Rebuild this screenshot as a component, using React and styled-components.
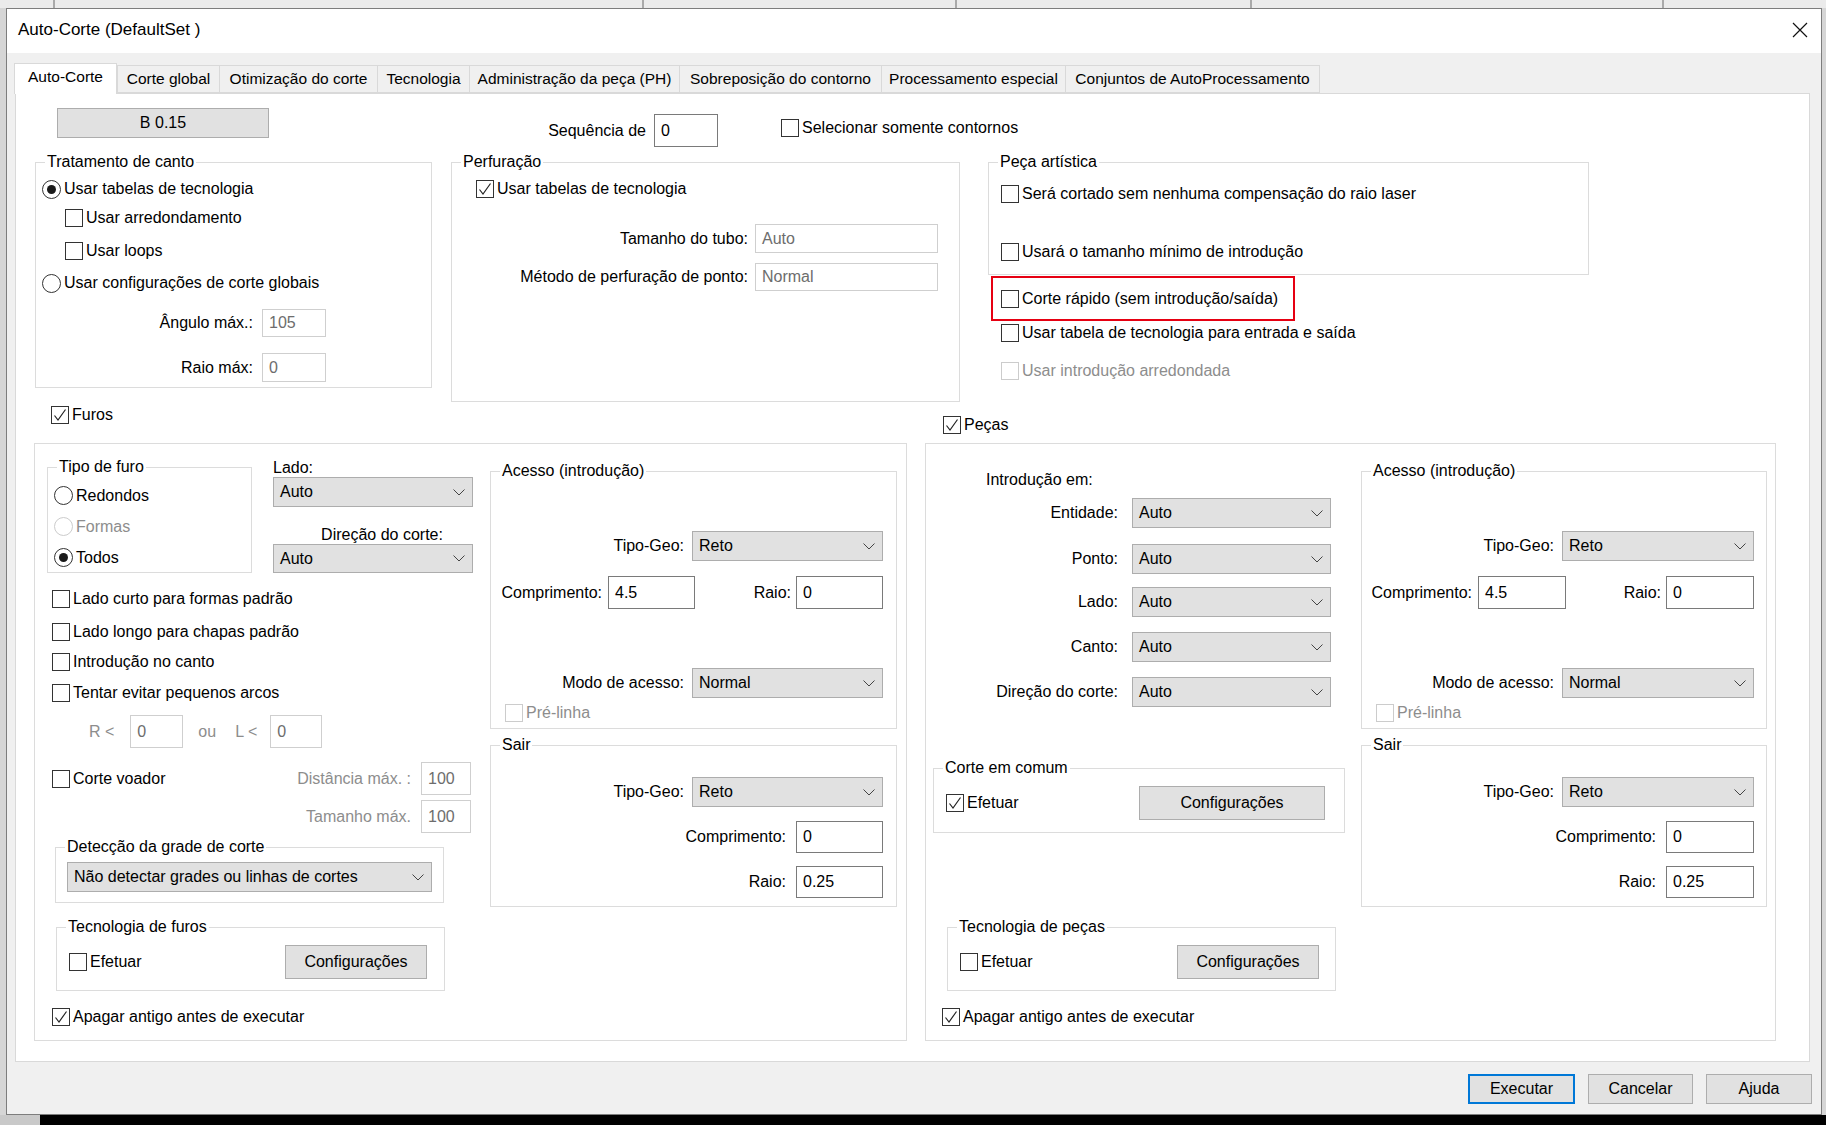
import React from 'react';
import styled, { createGlobalStyle } from 'styled-components';

const GlobalStyle = createGlobalStyle`
  * { box-sizing: border-box; }
  html, body { margin: 0; padding: 0; }
  body {
    font-family: "Liberation Sans", Arial, sans-serif;
    font-size: 16px;
    color: #000;
    background: #d6d6d6;
  }
`;

const Desktop = styled.div`
  width: 1826px;
  height: 1125px;
  overflow: hidden;
  display: flex;
  flex-direction: column;
  background: #d6d6d6;
`;

const BackBar = styled.div`
  height: 8px;
  flex-shrink: 0;
  display: flex;
  background: #ebebeb;
`;

const BackCell = styled.div`
  flex-shrink: 0;
  width: ${p => p.$w}px;
  border-right: 2px solid #a9a9a9;
`;

const BottomBar = styled.div`
  height: 10px;
  flex-shrink: 0;
  display: flex;
  background: #000;
`;

const BottomEdge = styled.div`
  width: 40px;
  background: #c9c9c9;
`;

const Dialog = styled.div`
  width: 1816px;
  height: 1107px;
  margin-left: 6px;
  flex-shrink: 0;
  display: flex;
  flex-direction: column;
  background: #f0f0f0;
  border: 1px solid #7d7d7d;
`;

const TitleBar = styled.div`
  height: 44px;
  flex-shrink: 0;
  display: flex;
  align-items: center;
  justify-content: space-between;
  padding: 0 13px 2px 11px;
  background: #fff;
  font-size: 17px;
`;

const Body = styled.div`
  flex: 1;
  display: flex;
  flex-direction: column;
  padding: 12px 11px 0 8px;
`;

const TabStrip = styled.div`
  height: 28px;
  display: flex;
  align-items: flex-end;
  margin-left: -1px;
`;

const Tab = styled.div`
  flex-shrink: 0;
  position: relative;
  z-index: ${p => (p.$active ? 2 : 1)};
  width: ${p => p.$w}px;
  height: ${p => (p.$active ? 31 : 28)}px;
  margin-bottom: ${p => (p.$active ? -1 : 0)}px;
  margin-left: ${p => (p.$first || p.$afterActive ? 0 : -1)}px;
  display: flex;
  align-items: center;
  justify-content: center;
  padding-bottom: ${p => (p.$active ? 4 : 0)}px;
  font-size: 15.5px;
  white-space: nowrap;
  background: ${p => (p.$active ? '#fff' : '#f0f0f0')};
  border: 1px solid #d9d9d9;
  border-bottom: ${p => (p.$active ? 'none' : '1px solid #d9d9d9')};
`;

const Panel = styled.div`
  width: 1795px;
  height: 969px;
  flex-shrink: 0;
  background: #fff;
  border: 1px solid #d9d9d9;
`;

const Footer = styled.div`
  flex: 1;
  display: flex;
  justify-content: flex-end;
  align-items: flex-start;
  gap: 13px;
  padding: 12px 0 0 0;
  margin-right: -2px;
`;

const Row = styled.div`
  flex-shrink: 0;
  display: flex;
  align-items: ${p => p.$ai || 'center'};
  justify-content: ${p => p.$jc || 'flex-start'};
  height: ${p => p.$h || 26}px;
  width: ${p => (p.$w ? `${p.$w}px` : 'auto')};
  margin-top: ${p => p.$mt || 0}px;
  margin-left: ${p => p.$ml || 0}px;
  padding-left: ${p => p.$pl || 0}px;
  padding-right: ${p => p.$pr || 0}px;
`;

const Stack = styled.div`
  flex-shrink: 0;
  display: flex;
  flex-direction: column;
  width: ${p => p.$w}px;
  margin-top: ${p => p.$mt || 0}px;
  margin-left: ${p => p.$ml || 0}px;
`;

const Header = styled.div`
  height: 41px;
  display: flex;
  flex-direction: column;
`;

const BigBox = styled.div`
  width: ${p => p.$w}px;
  height: 598px;
  display: flex;
  align-items: flex-start;
  border: 1px solid #dcdcdc;
`;

const Group = styled.div`
  position: relative;
  flex-shrink: 0;
  display: flex;
  flex-direction: column;
  width: ${p => p.$w}px;
  height: ${p => p.$h}px;
  margin-top: ${p => p.$mt || 0}px;
  margin-left: ${p => p.$ml || 0}px;
  border: 1px solid #dcdcdc;
`;

const Legend = styled.span`
  position: absolute;
  top: -11px;
  left: ${p => p.$x || 9}px;
  padding: 0 2px;
  line-height: 20px;
  background: #fff;
  white-space: nowrap;
`;

const RedFrame = styled.div`
  width: 304px;
  height: 45px;
  margin: 1px 0 0 3px;
  display: flex;
  align-items: center;
  padding-left: 8px;
  border: 2px solid #e60012;
`;

const Label = styled.span`
  flex-shrink: 0;
  display: inline-block;
  width: ${p => (p.$w ? `${p.$w}px` : 'auto')};
  text-align: ${p => (p.$right ? 'right' : 'left')};
  margin-left: ${p => p.$ml || 0}px;
  padding-left: ${p => p.$pl || 0}px;
  color: ${p => (p.$off ? '#8d8d8d' : '#000')};
  white-space: nowrap;
`;

const Field = styled.div`
  flex-shrink: 0;
  width: ${p => p.$w}px;
  height: ${p => p.$h || 30}px;
  margin-left: ${p => p.$ml || 0}px;
  padding: ${p => Math.max(0, Math.round(((p.$h || 30) - 20) / 2) - 1)}px 0 0 6px;
  line-height: 20px;
  background: #fff;
  border: 1px solid ${p => (p.$off ? '#cfcfcf' : '#7a7a7a')};
  color: ${p => (p.$off ? '#6d6d6d' : '#000')};
`;

const SelectBox = styled.div`
  flex-shrink: 0;
  display: flex;
  align-items: center;
  justify-content: space-between;
  width: ${p => p.$w}px;
  height: ${p => p.$h || 30}px;
  margin-top: ${p => p.$mt || 0}px;
  margin-left: ${p => p.$ml || 0}px;
  padding: 0 7px 0 6px;
  background: #e1e1e1;
  border: 1px solid #adadad;
`;

const Btn = styled.button`
  flex-shrink: 0;
  width: ${p => p.$w}px;
  height: ${p => p.$h || 30}px;
  margin-left: ${p => p.$ml || 0}px;
  padding: 0;
  font: inherit;
  color: #000;
  background: #e1e1e1;
  border: ${p => (p.$default ? '2px solid #0078d7' : '1px solid #adadad')};
`;

const CheckLabel = styled.span`
  display: inline-flex;
  align-items: center;
  gap: 3px;
  white-space: nowrap;
  color: ${p => (p.$off ? '#8d8d8d' : '#000')};
`;

const CheckBox = styled.span`
  width: 18px;
  height: 18px;
  display: inline-flex;
  align-items: center;
  justify-content: center;
  background: #fff;
  border: 1px solid ${p => (p.$off ? '#cccccc' : '#333')};
`;

const RadioDot = styled.span`
  width: 19px;
  height: 19px;
  display: inline-flex;
  align-items: center;
  justify-content: center;
  border-radius: 50%;
  background: #fff;
  border: 1px solid ${p => (p.$off ? '#cccccc' : '#333')};
  &::after {
    content: '';
    display: ${p => (p.$on ? 'block' : 'none')};
    width: 9px;
    height: 9px;
    border-radius: 50%;
    background: #1a1a1a;
  }
`;

const Check = ({ checked, disabled, children }) => (
  <CheckLabel $off={disabled}>
    <CheckBox $off={disabled}>
      {checked && (
        <svg width="14" height="14" viewBox="0 0 14 14">
          <polyline points="1.5,7.5 5,12 12.5,1.5" fill="none" stroke="#222" strokeWidth="1.2" />
        </svg>
      )}
    </CheckBox>
    {children}
  </CheckLabel>
);

const Radio = ({ checked, disabled, children }) => (
  <CheckLabel $off={disabled}>
    <RadioDot $on={checked} $off={disabled} />
    {children}
  </CheckLabel>
);

const Chevron = () => (
  <svg width="12" height="7" viewBox="0 0 12 7">
    <polyline points="0.5,0.5 6,6 11.5,0.5" fill="none" stroke="#444" strokeWidth="1" />
  </svg>
);

const Select = ({ value, ...rest }) => (
  <SelectBox {...rest}>
    <span>{value}</span>
    <Chevron />
  </SelectBox>
);

const CloseIcon = () => (
  <svg width="16" height="16" viewBox="0 0 16 16">
    <path d="M1 1 L15 15 M15 1 L1 15" stroke="#111" strokeWidth="1.2" />
  </svg>
);

const tabs = [
  { label: 'Auto-Corte', w: 103, active: true },
  { label: 'Corte global', w: 103 },
  { label: 'Otimização do corte', w: 159 },
  { label: 'Tecnologia', w: 93 },
  { label: 'Administração da peça (PH)', w: 211 },
  { label: 'Sobreposição do contorno', w: 203 },
  { label: 'Processamento especial', w: 185 },
  { label: 'Conjuntos de AutoProcessamento', w: 255 },
];

const AccessGroup = ({ w, selW, inW, pr }) => (
  <Group $w={w} $h={258} $mt={27}>
    <Legend>Acesso (introdução)</Legend>
    <Row $mt={59} $h={30} $jc="flex-end" $pr={pr}>
      <Label>Tipo-Geo:</Label>
      <Select $ml={8} $w={selW} value="Reto" />
    </Row>
    <Row $mt={15} $h={33} $jc="space-between" $pr={pr}>
      <Row $w={204} $h={33} $jc="flex-end">
        <Label>Comprimento:</Label>
        <Field $ml={6} $w={inW} $h={33}>4.5</Field>
      </Row>
      <Row $h={33}>
        <Label>Raio:</Label>
        <Field $ml={5} $w={inW} $h={33}>0</Field>
      </Row>
    </Row>
    <Row $mt={59} $h={30} $jc="flex-end" $pr={pr}>
      <Label>Modo de acesso:</Label>
      <Select $ml={8} $w={selW} value="Normal" />
    </Row>
    <Row $mt={3} $h={24} $pl={14}>
      <Check disabled>Pré-linha</Check>
    </Row>
  </Group>
);

const ExitGroup = ({ w, selW, inW, pr }) => (
  <Group $w={w} $h={162} $mt={16}>
    <Legend>Sair</Legend>
    <Row $mt={31} $h={30} $jc="flex-end" $pr={pr}>
      <Label>Tipo-Geo:</Label>
      <Select $ml={8} $w={selW} value="Reto" />
    </Row>
    <Row $mt={14} $h={32} $jc="flex-end" $pr={pr}>
      <Label>Comprimento:</Label>
      <Field $ml={10} $w={inW} $h={32}>0</Field>
    </Row>
    <Row $mt={13} $h={32} $jc="flex-end" $pr={pr}>
      <Label>Raio:</Label>
      <Field $ml={10} $w={inW} $h={32}>0.25</Field>
    </Row>
  </Group>
);

const FurosColumn = () => (
  <Stack $w={873} $ml={18}>
    <Header>
      <Row $h={26} $pl={17}>
        <Check checked>Furos</Check>
      </Row>
    </Header>
    <BigBox $w={873}>
      <Stack $w={440}>
        <Row $mt={14} $h={115} $ai="flex-start">
          <Group $ml={12} $mt={9} $w={205} $h={106}>
            <Legend>Tipo de furo</Legend>
            <Row $mt={12} $h={31} $pl={6}>
              <Radio>Redondos</Radio>
            </Row>
            <Row $h={31} $pl={6}>
              <Radio disabled>Formas</Radio>
            </Row>
            <Row $h={31} $pl={6}>
              <Radio checked>Todos</Radio>
            </Row>
          </Group>
          <Stack $w={200} $ml={21}>
            <Row $h={19}>
              <Label>Lado:</Label>
            </Row>
            <Select $w={200} $h={30} value="Auto" />
            <Row $mt={18} $h={19} $jc="center" $pl={18}>
              <Label>Direção do corte:</Label>
            </Row>
            <Select $w={200} $h={29} value="Auto" />
          </Stack>
        </Row>
        <Row $mt={13} $pl={17}>
          <Check>Lado curto para formas padrão</Check>
        </Row>
        <Row $mt={7} $pl={17}>
          <Check>Lado longo para chapas padrão</Check>
        </Row>
        <Row $mt={4} $pl={17}>
          <Check>Introdução no canto</Check>
        </Row>
        <Row $mt={5} $pl={17}>
          <Check>Tentar evitar pequenos arcos</Check>
        </Row>
        <Row $mt={9} $h={33} $pl={54}>
          <Label $off>R &lt;</Label>
          <Field $off $ml={16} $w={53} $h={33}>0</Field>
          <Label $off $ml={15}>ou</Label>
          <Label $off $ml={19}>L &lt;</Label>
          <Field $off $ml={13} $w={52} $h={33}>0</Field>
        </Row>
        <Row $mt={14} $h={33} $w={436} $pl={17} $jc="space-between">
          <Check>Corte voador</Check>
          <Row $h={33}>
            <Label $off>Distância máx. :</Label>
            <Field $off $ml={10} $w={50} $h={33}>100</Field>
          </Row>
        </Row>
        <Row $mt={5} $h={33} $w={436} $jc="flex-end">
          <Label $off>Tamanho máx.</Label>
          <Field $off $ml={10} $w={50} $h={33}>100</Field>
        </Row>
        <Group $mt={14} $ml={20} $w={389} $h={56}>
          <Legend>Detecção da grade de corte</Legend>
          <Select $mt={14} $ml={11} $w={365} $h={30} value="Não detectar grades ou linhas de cortes" />
        </Group>
        <Group $mt={24} $ml={21} $w={389} $h={64}>
          <Legend>Tecnologia de furos</Legend>
          <Row $mt={17} $h={34} $pl={12} $pr={17} $jc="space-between">
            <Check>Efetuar</Check>
            <Btn $w={142} $h={34}>Configurações</Btn>
          </Row>
        </Group>
        <Row $mt={13} $pl={17}>
          <Check checked>Apagar antigo antes de executar</Check>
        </Row>
      </Stack>
      <Stack $w={407} $ml={15}>
        <AccessGroup w={407} selW={191} inW={87} pr={13} />
        <ExitGroup w={407} selW={191} inW={87} pr={13} />
      </Stack>
    </BigBox>
  </Stack>
);

const entryRows = [
  { label: 'Entidade:', mt: 8 },
  { label: 'Ponto:', mt: 16 },
  { label: 'Lado:', mt: 13 },
  { label: 'Canto:', mt: 15 },
  { label: 'Direção do corte:', mt: 15 },
];

const PecasColumn = () => (
  <Stack $w={851} $ml={18}>
    <Header>
      <Row $mt={10} $h={26} $pl={18}>
        <Check checked>Peças</Check>
      </Row>
    </Header>
    <BigBox $w={851}>
      <Stack $w={435}>
        <Row $mt={26} $h={20} $pl={60}>
          <Label>Introdução em:</Label>
        </Row>
        {entryRows.map(r => (
          <Row key={r.label} $mt={r.mt} $h={30}>
            <Label $w={192} $right>{r.label}</Label>
            <Select $ml={14} $w={199} value="Auto" />
          </Row>
        ))}
        <Group $mt={61} $ml={7} $w={412} $h={65}>
          <Legend>Corte em comum</Legend>
          <Row $mt={17} $h={34} $pl={12} $pr={19} $jc="space-between">
            <Check checked>Efetuar</Check>
            <Btn $w={186} $h={34}>Configurações</Btn>
          </Row>
        </Group>
        <Group $mt={94} $ml={21} $w={389} $h={64}>
          <Legend>Tecnologia de peças</Legend>
          <Row $mt={17} $h={34} $pl={12} $pr={16} $jc="space-between">
            <Check>Efetuar</Check>
            <Btn $w={142} $h={34}>Configurações</Btn>
          </Row>
        </Group>
        <Row $mt={13} $pl={16}>
          <Check checked>Apagar antigo antes de executar</Check>
        </Row>
      </Stack>
      <Stack $w={406}>
        <AccessGroup w={406} selW={192} inW={88} pr={12} />
        <ExitGroup w={406} selW={192} inW={88} pr={12} />
      </Stack>
    </BigBox>
  </Stack>
);

export default function App() {
  return (
    <Desktop>
      <GlobalStyle />
      <BackBar>
        <BackCell $w={55} />
        <BackCell $w={589} />
        <BackCell $w={313} />
        <BackCell $w={295} />
        <BackCell $w={412} />
      </BackBar>
      <Dialog>
        <TitleBar>
          <span>Auto-Corte (DefaultSet )</span>
          <CloseIcon />
        </TitleBar>
        <Body>
          <TabStrip>
            {tabs.map((t, i) => (
              <Tab
                key={t.label}
                $w={t.w}
                $active={t.active}
                $first={i === 0}
                $afterActive={i > 0 && tabs[i - 1].active}
              >
                {t.label}
              </Tab>
            ))}
          </TabStrip>
          <Panel>
            <Row $mt={14} $h={39} $ai="flex-start">
              <Btn $ml={41} $w={212} $h={30}>B 0.15</Btn>
              <Row $w={449} $h={33} $jc="flex-end" $mt={6}>
                <Label>Sequência de</Label>
                <Field $ml={8} $w={64} $h={33}>0</Field>
              </Row>
              <Row $ml={63} $mt={7} $h={26}>
                <Check>Selecionar somente contornos</Check>
              </Row>
            </Row>
            <Row $mt={15} $h={240} $ai="flex-start">
              <Group $ml={19} $w={397} $h={226}>
                <Legend>Tratamento de canto</Legend>
                <Row $mt={11} $h={30} $pl={6}>
                  <Radio checked>Usar tabelas de tecnologia</Radio>
                </Row>
                <Row $h={28} $pl={29}>
                  <Check>Usar arredondamento</Check>
                </Row>
                <Row $h={38} $pl={29}>
                  <Check>Usar loops</Check>
                </Row>
                <Row $h={26} $pl={6}>
                  <Radio>Usar configurações de corte globais</Radio>
                </Row>
                <Row $h={54}>
                  <Label $w={217} $right>Ângulo máx.:</Label>
                  <Field $off $ml={9} $w={64} $h={28}>105</Field>
                </Row>
                <Row $h={35}>
                  <Label $w={217} $right>Raio máx:</Label>
                  <Field $off $ml={9} $w={64} $h={29}>0</Field>
                </Row>
              </Group>
              <Group $ml={19} $w={509} $h={240}>
                <Legend>Perfuração</Legend>
                <Row $mt={11} $h={30} $pl={24}>
                  <Check checked>Usar tabelas de tecnologia</Check>
                </Row>
                <Row $mt={20} $h={29}>
                  <Label $w={296} $right>Tamanho do tubo:</Label>
                  <Field $off $ml={7} $w={183} $h={29}>Auto</Field>
                </Row>
                <Row $mt={10} $h={28}>
                  <Label $w={296} $right>Método de perfuração de ponto:</Label>
                  <Field $off $ml={7} $w={183} $h={28}>Normal</Field>
                </Row>
              </Group>
              <Stack $w={601} $ml={28}>
                <Group $w={601} $h={113}>
                  <Legend>Peça artística</Legend>
                  <Row $mt={16} $h={30} $pl={12}>
                    <Check>Será cortado sem nenhuma compensação do raio laser</Check>
                  </Row>
                  <Row $mt={28} $h={30} $pl={12}>
                    <Check>Usará o tamanho mínimo de introdução</Check>
                  </Row>
                </Group>
                <RedFrame>
                  <Check>Corte rápido (sem introdução/saída)</Check>
                </RedFrame>
                <Row $h={24} $pl={13}>
                  <Check>Usar tabela de tecnologia para entrada e saída</Check>
                </Row>
                <Row $mt={14} $h={24} $pl={13}>
                  <Check disabled>Usar introdução arredondada</Check>
                </Row>
              </Stack>
            </Row>
            <Row $h={639} $ai="flex-start">
              <FurosColumn />
              <PecasColumn />
            </Row>
          </Panel>
          <Footer>
            <Btn $default $w={107} $h={30}>Executar</Btn>
            <Btn $w={105} $h={30}>Cancelar</Btn>
            <Btn $w={106} $h={30}>Ajuda</Btn>
          </Footer>
        </Body>
      </Dialog>
      <BottomBar>
        <BottomEdge />
      </BottomBar>
    </Desktop>
  );
}
